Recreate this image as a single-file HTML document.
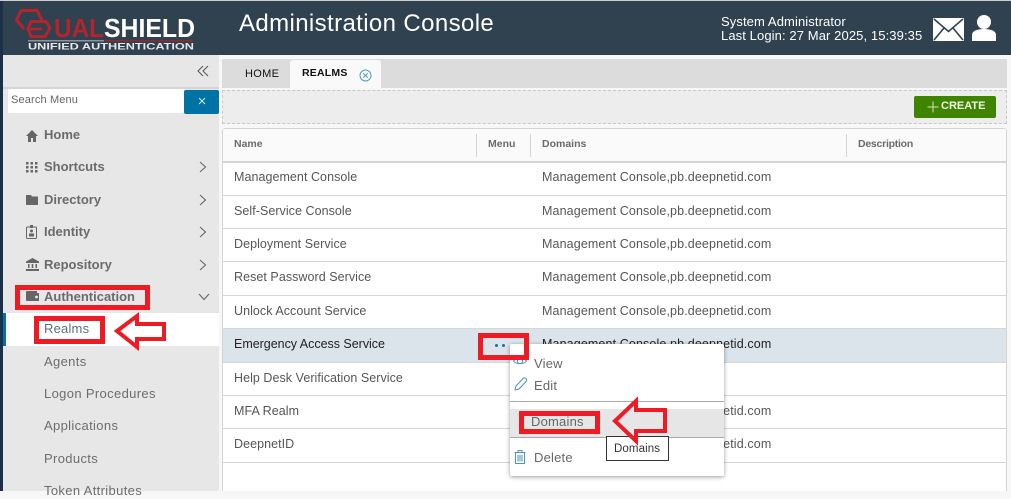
<!DOCTYPE html>
<html><head><meta charset="utf-8"><style>
html,body{margin:0;padding:0;width:1011px;height:491px;overflow:hidden;background:#f7f7f7;font-family:"Liberation Sans",sans-serif;}
.a{position:absolute;white-space:nowrap}
.nav{position:absolute;left:44px;font-size:13px;color:#6b6b6b;font-weight:bold;line-height:16px;letter-spacing:0}
.sub{position:absolute;left:44px;font-size:13px;color:#6d6d6d;line-height:16px;letter-spacing:.35px}
.line{position:absolute;left:223px;width:784px;height:1px;background:#d6d6d6}
.n{position:absolute;left:234px;font-size:12.5px;color:#565656;line-height:16px;letter-spacing:.05px}
.d{position:absolute;left:542px;font-size:12.5px;color:#565656;line-height:16px;letter-spacing:.12px}
.th{position:absolute;top:137px;font-size:10.5px;font-weight:bold;color:#6b6b6b;line-height:14px}
.box{position:absolute;border:4px solid #ed1c24;box-sizing:border-box}
svg{position:absolute;overflow:visible}
</style></head><body>
<div class="a" style="left:0;top:1px;width:1011px;height:54px;background:#304150"></div>
<div class="a" style="left:0;top:0;width:1011px;height:1px;background:#cfcfcf"></div>
<div class="a" style="left:0;top:1px;width:3px;height:490px;background:#1c3148"></div>
<div class="a" style="left:1008px;top:55px;width:3px;height:436px;background:#f7f7f7"></div>

<svg style="left:0;top:0" width="210" height="55">
<path d="M24 29L16.500 20L21 10.500H37L42 20" fill="none" stroke="#b5232c" stroke-width="3"/>
<path d="M31 21.500H46L50 28L45 36.500H31L28 29Z" fill="none" stroke="#b5232c" stroke-width="3"/>
<path d="M30 29H42" stroke="#b5232c" stroke-width="2.500"/>
<text x="54" y="37" font-family="Liberation Sans" font-weight="bold" font-size="26" fill="#b5232c" textLength="50" lengthAdjust="spacingAndGlyphs">UAL</text>
<text x="104" y="37" font-family="Liberation Sans" font-weight="bold" font-size="26" fill="#fff" textLength="91" lengthAdjust="spacingAndGlyphs">SHIELD</text>
<rect x="28" y="40" width="76" height="1.500" fill="#8d959c"/>
<rect x="105" y="40" width="88" height="1.500" fill="#8d2a33"/>
<text x="28" y="49.500" font-family="Liberation Sans" font-weight="bold" font-size="9" fill="#e8e8e8" textLength="166" lengthAdjust="spacingAndGlyphs">UNIFIED AUTHENTICATION</text>
</svg>
<div class="a" style="left:239px;top:10px;font-size:24px;line-height:28px;color:#fff;letter-spacing:.38px">Administration Console</div>
<div class="a" style="left:721px;top:15px;font-size:13px;line-height:14px;color:#fff;letter-spacing:.1px">System Administrator<br>Last Login: 27 Mar 2025, 15:39:35</div>
<svg style="left:933px;top:17px" width="31" height="24"><rect x="0" y="1" width="31" height="23" rx="1" fill="#fff"/><path d="M1 2L15.500 14.500L30 2M1 23L11 11M30 23L20 11" fill="none" stroke="#304150" stroke-width="1.600"/></svg>
<svg style="left:972px;top:14px" width="24" height="28"><circle cx="12" cy="8" r="7" fill="#fff"/><path d="M0 27V21C0 17 5 15 12 15S24 17 24 21V27Z" fill="#fff"/></svg>

<!-- sidebar -->
<div class="a" style="left:3px;top:55px;width:216px;height:436px;background:#e7e7e7"></div>
<div class="a" style="left:3px;top:87px;width:216px;height:2px;background:#d4d4d4"></div>
<svg style="left:197px;top:65px" width="12" height="12"><path d="M6 1L1 6L6 11M11 1L6 6L11 11" fill="none" stroke="#555" stroke-width="1"/></svg>
<div class="a" style="left:8px;top:89px;width:176px;height:24px;background:#fff"></div>
<div class="a" style="left:11px;top:93px;font-size:11px;line-height:14px;color:#666;letter-spacing:.15px">Search Menu</div>
<div class="a" style="left:184px;top:90px;width:35px;height:24px;background:#0072a3;border-radius:2px"></div>
<svg style="left:198px;top:97px" width="8" height="8"><path d="M1 1L7 7M7 1L1 7" stroke="#d7e8f0" stroke-width="1"/></svg>

<svg style="left:26px;top:129px" width="12" height="13"><path d="M6 1L0 7H2V13H5V9H7V13H10V7H12Z" fill="#666"/></svg>
<div class="nav" style="top:127px">Home</div>
<svg style="left:26px;top:161px" width="12" height="12"><g fill="#666"><rect x="0" y="1" width="2.500" height="2.500"/><rect x="4.500" y="1" width="2.500" height="2.500"/><rect x="9" y="1" width="2.500" height="2.500"/><rect x="0" y="5" width="2.500" height="2.500"/><rect x="4.500" y="5" width="2.500" height="2.500"/><rect x="9" y="5" width="2.500" height="2.500"/><rect x="0" y="9" width="2.500" height="2.500"/><rect x="4.500" y="9" width="2.500" height="2.500"/><rect x="9" y="9" width="2.500" height="2.500"/></g></svg>
<div class="nav" style="top:159px">Shortcuts</div>
<svg style="left:26px;top:194px" width="12" height="12"><path d="M0 1H5L6 2.500H12V11H0Z" fill="#666"/></svg>
<div class="nav" style="top:192px">Directory</div>
<svg style="left:26px;top:225px" width="12" height="14"><rect x=".5" y="2" width="10" height="11.500" rx="1" fill="none" stroke="#666"/><rect x="4" y="0" width="3" height="3" fill="#666"/><circle cx="5.500" cy="6" r="1.500" fill="#666"/><rect x="3" y="8.500" width="5" height="3" fill="#666"/></svg>
<div class="nav" style="top:224px">Identity</div>
<svg style="left:26px;top:258px" width="13" height="13"><path d="M6.500 0L13 3.500V5H0V3.500Z" fill="#666"/><path d="M2 6H3.500V10H2ZM5.700 6H7.300V10H5.700ZM9.500 6H11V10H9.500ZM0 11H13V13H0Z" fill="#666"/></svg>
<div class="nav" style="top:257px">Repository</div>
<svg style="left:26px;top:291px" width="13" height="11"><path d="M1 0H11V2H13V10H1C0 10 0 9 0 9V1C0 0 1 0 1 0Z" fill="#666"/><circle cx="10.500" cy="6" r="1.400" fill="#e7e7e7"/></svg>
<div class="nav" style="top:289px">Authentication</div>

<svg style="left:199px;top:161px" width="8" height="12"><path d="M1 1L6.500 6L1 11" fill="none" stroke="#666" stroke-width="1.100"/></svg>
<svg style="left:199px;top:194px" width="8" height="12"><path d="M1 1L6.500 6L1 11" fill="none" stroke="#666" stroke-width="1.100"/></svg>
<svg style="left:199px;top:226px" width="8" height="12"><path d="M1 1L6.500 6L1 11" fill="none" stroke="#666" stroke-width="1.100"/></svg>
<svg style="left:199px;top:259px" width="8" height="12"><path d="M1 1L6.500 6L1 11" fill="none" stroke="#666" stroke-width="1.100"/></svg>
<svg style="left:198px;top:293px" width="12" height="8"><path d="M1 1L6 6.500L11 1" fill="none" stroke="#666" stroke-width="1.100"/></svg>

<div class="a" style="left:3px;top:313px;width:216px;height:33px;background:#fff"></div>
<div class="a" style="left:3px;top:313px;width:3px;height:33px;background:#0072a3"></div>
<div class="sub" style="top:321px;color:#5f6f80;letter-spacing:.2px">Realms</div>
<div class="sub" style="top:354px">Agents</div>
<div class="sub" style="top:386px">Logon Procedures</div>
<div class="sub" style="top:418px">Applications</div>
<div class="sub" style="top:451px">Products</div>
<div class="sub" style="top:483px">Token Attributes</div>

<!-- tabs -->
<div class="a" style="left:222px;top:59px;width:785px;height:29px;background:#dcdcdc"></div>
<div class="a" style="left:290px;top:60px;width:91px;height:28px;background:#f9f9f9;border-radius:3px 3px 0 0"></div>
<div class="a" style="left:245px;top:67px;font-size:11px;line-height:14px;color:#111;letter-spacing:.3px">HOME</div>
<div class="a" style="left:302px;top:66px;font-size:10.500px;font-weight:bold;line-height:14px;color:#111;letter-spacing:.2px">REALMS</div>
<svg style="left:359px;top:69px" width="13" height="13"><circle cx="6.500" cy="6.500" r="5.500" fill="none" stroke="#4b9cc4" stroke-width="1"/><path d="M4.300 4.300L8.700 8.700M8.700 4.300L4.300 8.700" stroke="#4b8fb3" stroke-width="1"/></svg>

<!-- toolbar -->
<div class="a" style="left:222px;top:90px;width:785px;height:34px;background:#ededed;border:1px dashed #c8c8c8;box-sizing:border-box"></div>
<div class="a" style="left:914px;top:96px;width:82px;height:22px;background:#3f8400;border-radius:2px"></div>
<svg style="left:927px;top:101px" width="12" height="12"><path d="M6 .5V11.500M.5 6H11.500" stroke="#cfe3bc" stroke-width="1"/></svg>
<div class="a" style="left:941px;top:99px;font-size:11px;font-weight:bold;line-height:14px;color:#f0f6e8;letter-spacing:0">CREATE</div>

<!-- table -->
<div class="a" style="left:222px;top:128px;width:785px;height:363px;background:#fff;border:1px solid #d4d4d4;border-bottom:0;box-sizing:border-box;border-radius:3px 3px 0 0"></div>
<div class="a" style="left:223px;top:129px;width:783px;height:32px;background:#fafafa"></div>
<div class="line" style="top:161px;height:2px;background:#d4d4d4"></div>
<div class="a" style="left:476px;top:134px;width:1px;height:23px;background:#d4d4d4"></div>
<div class="a" style="left:530px;top:134px;width:1px;height:23px;background:#d4d4d4"></div>
<div class="a" style="left:846px;top:134px;width:1px;height:23px;background:#d4d4d4"></div>
<div class="th" style="left:234px">Name</div>
<div class="th" style="left:488px">Menu</div>
<div class="th" style="left:542px">Domains</div>
<div class="th" style="left:858px;letter-spacing:-.25px">Description</div>

<div class="a" style="left:223px;top:329px;width:783px;height:33px;background:#dae4ea"></div>
<div class="line" style="top:195px"></div><div class="line" style="top:228px"></div><div class="line" style="top:261px"></div><div class="line" style="top:295px"></div><div class="line" style="top:328px"></div><div class="line" style="top:362px"></div><div class="line" style="top:395px"></div><div class="line" style="top:428px"></div><div class="line" style="top:462px"></div>

<div class="n" style="top:169px">Management Console</div><div class="d" style="top:169px">Management Console,pb.deepnetid.com</div>
<div class="n" style="top:203px">Self-Service Console</div><div class="d" style="top:203px">Management Console,pb.deepnetid.com</div>
<div class="n" style="top:236px">Deployment Service</div><div class="d" style="top:236px">Management Console,pb.deepnetid.com</div>
<div class="n" style="top:269px">Reset Password Service</div><div class="d" style="top:269px">Management Console,pb.deepnetid.com</div>
<div class="n" style="top:303px">Unlock Account Service</div><div class="d" style="top:303px">Management Console,pb.deepnetid.com</div>
<div class="n" style="top:336px;color:#222;letter-spacing:-.02px">Emergency Access Service</div><div class="d" style="top:336px;color:#222">Management Console,pb.deepnetid.com</div>
<div class="n" style="top:370px">Help Desk Verification Service</div>
<div class="n" style="top:403px">MFA Realm</div><div class="d" style="top:403px">Management Console,pb.deepnetid.com</div>
<div class="n" style="top:436px">DeepnetID</div><div class="d" style="top:436px">Management Console,pb.deepnetid.com</div>

<div class="a" style="left:495px;top:344px;width:3px;height:3px;border-radius:50%;background:#1f6f9a"></div>
<div class="a" style="left:502px;top:344px;width:3px;height:3px;border-radius:50%;background:#1f6f9a"></div>

<!-- menu -->
<div class="a" style="left:510px;top:344px;width:214px;height:132px;background:#fff;border-radius:2px;box-shadow:0 1px 4px rgba(0,0,0,.4)"></div>
<div class="a" style="left:510px;top:409px;width:214px;height:28px;background:#e6e6e6"></div>
<div class="a" style="left:510px;top:401px;width:214px;height:1px;background:#a9a9a9"></div>
<div class="a" style="left:510px;top:437px;width:214px;height:1px;background:#a9a9a9"></div>
<svg style="left:513px;top:356px" width="14" height="12"><path d="M.5 5C3 1.500 11 1.500 13.500 5C11 8.500 3 8.500 .5 5Z" fill="none" stroke="#4b93b8"/><circle cx="7" cy="5" r="2.600" fill="none" stroke="#4b93b8"/></svg>
<div class="a" style="left:534px;top:356px;font-size:13px;line-height:16px;color:#666;letter-spacing:.2px">View</div>
<svg style="left:514px;top:377px" width="13" height="14"><path d="M1 13L2 9L9 1.500C10 .5 11 .5 12 1.500C13 2.500 13 3.500 12 4.500L5 12Z" fill="none" stroke="#4b93b8"/></svg>
<div class="a" style="left:534px;top:378px;font-size:13px;line-height:16px;color:#666;letter-spacing:.2px">Edit</div>
<div class="a" style="left:531px;top:414px;font-size:13px;line-height:16px;color:#666;letter-spacing:.2px">Domains</div>
<svg style="left:514px;top:450px" width="12" height="14"><path d="M.5 2.500H11.500M4 2.500V.5H8V2.500M1.500 2.500V13.500H10.500V2.500M4 5V11.500M6 5V11.500M8 5V11.500" fill="none" stroke="#4b93b8"/></svg>
<div class="a" style="left:534px;top:450px;font-size:13px;line-height:16px;color:#666;letter-spacing:.2px">Delete</div>

<div class="a" style="left:606px;top:436px;width:63px;height:25px;background:#fff;border:1px solid #333;box-sizing:border-box"></div>
<div class="a" style="left:614px;top:442px;font-size:11.500px;line-height:14px;color:#333;letter-spacing:.1px">Domains</div>

<!-- annotations -->
<div class="box" style="left:15px;top:285px;width:135px;height:25px;border-width:5px"></div>
<div class="box" style="left:34px;top:316px;width:71px;height:28px;border-width:5px"></div>
<div class="box" style="left:478px;top:333px;width:51px;height:27px;border-width:5px"></div>
<div class="box" style="left:519px;top:411px;width:81px;height:23px;border-width:5px"></div>
<svg style="left:0;top:0" width="1011" height="491">
<path d="M117 331L137 316V324H164V339H137V347Z" fill="none" stroke="#ed1c24" stroke-width="4"/>
<path d="M615 421L636 401V410H665V431H636V441Z" fill="none" stroke="#ed1c24" stroke-width="4"/>
</svg>
</body></html>
